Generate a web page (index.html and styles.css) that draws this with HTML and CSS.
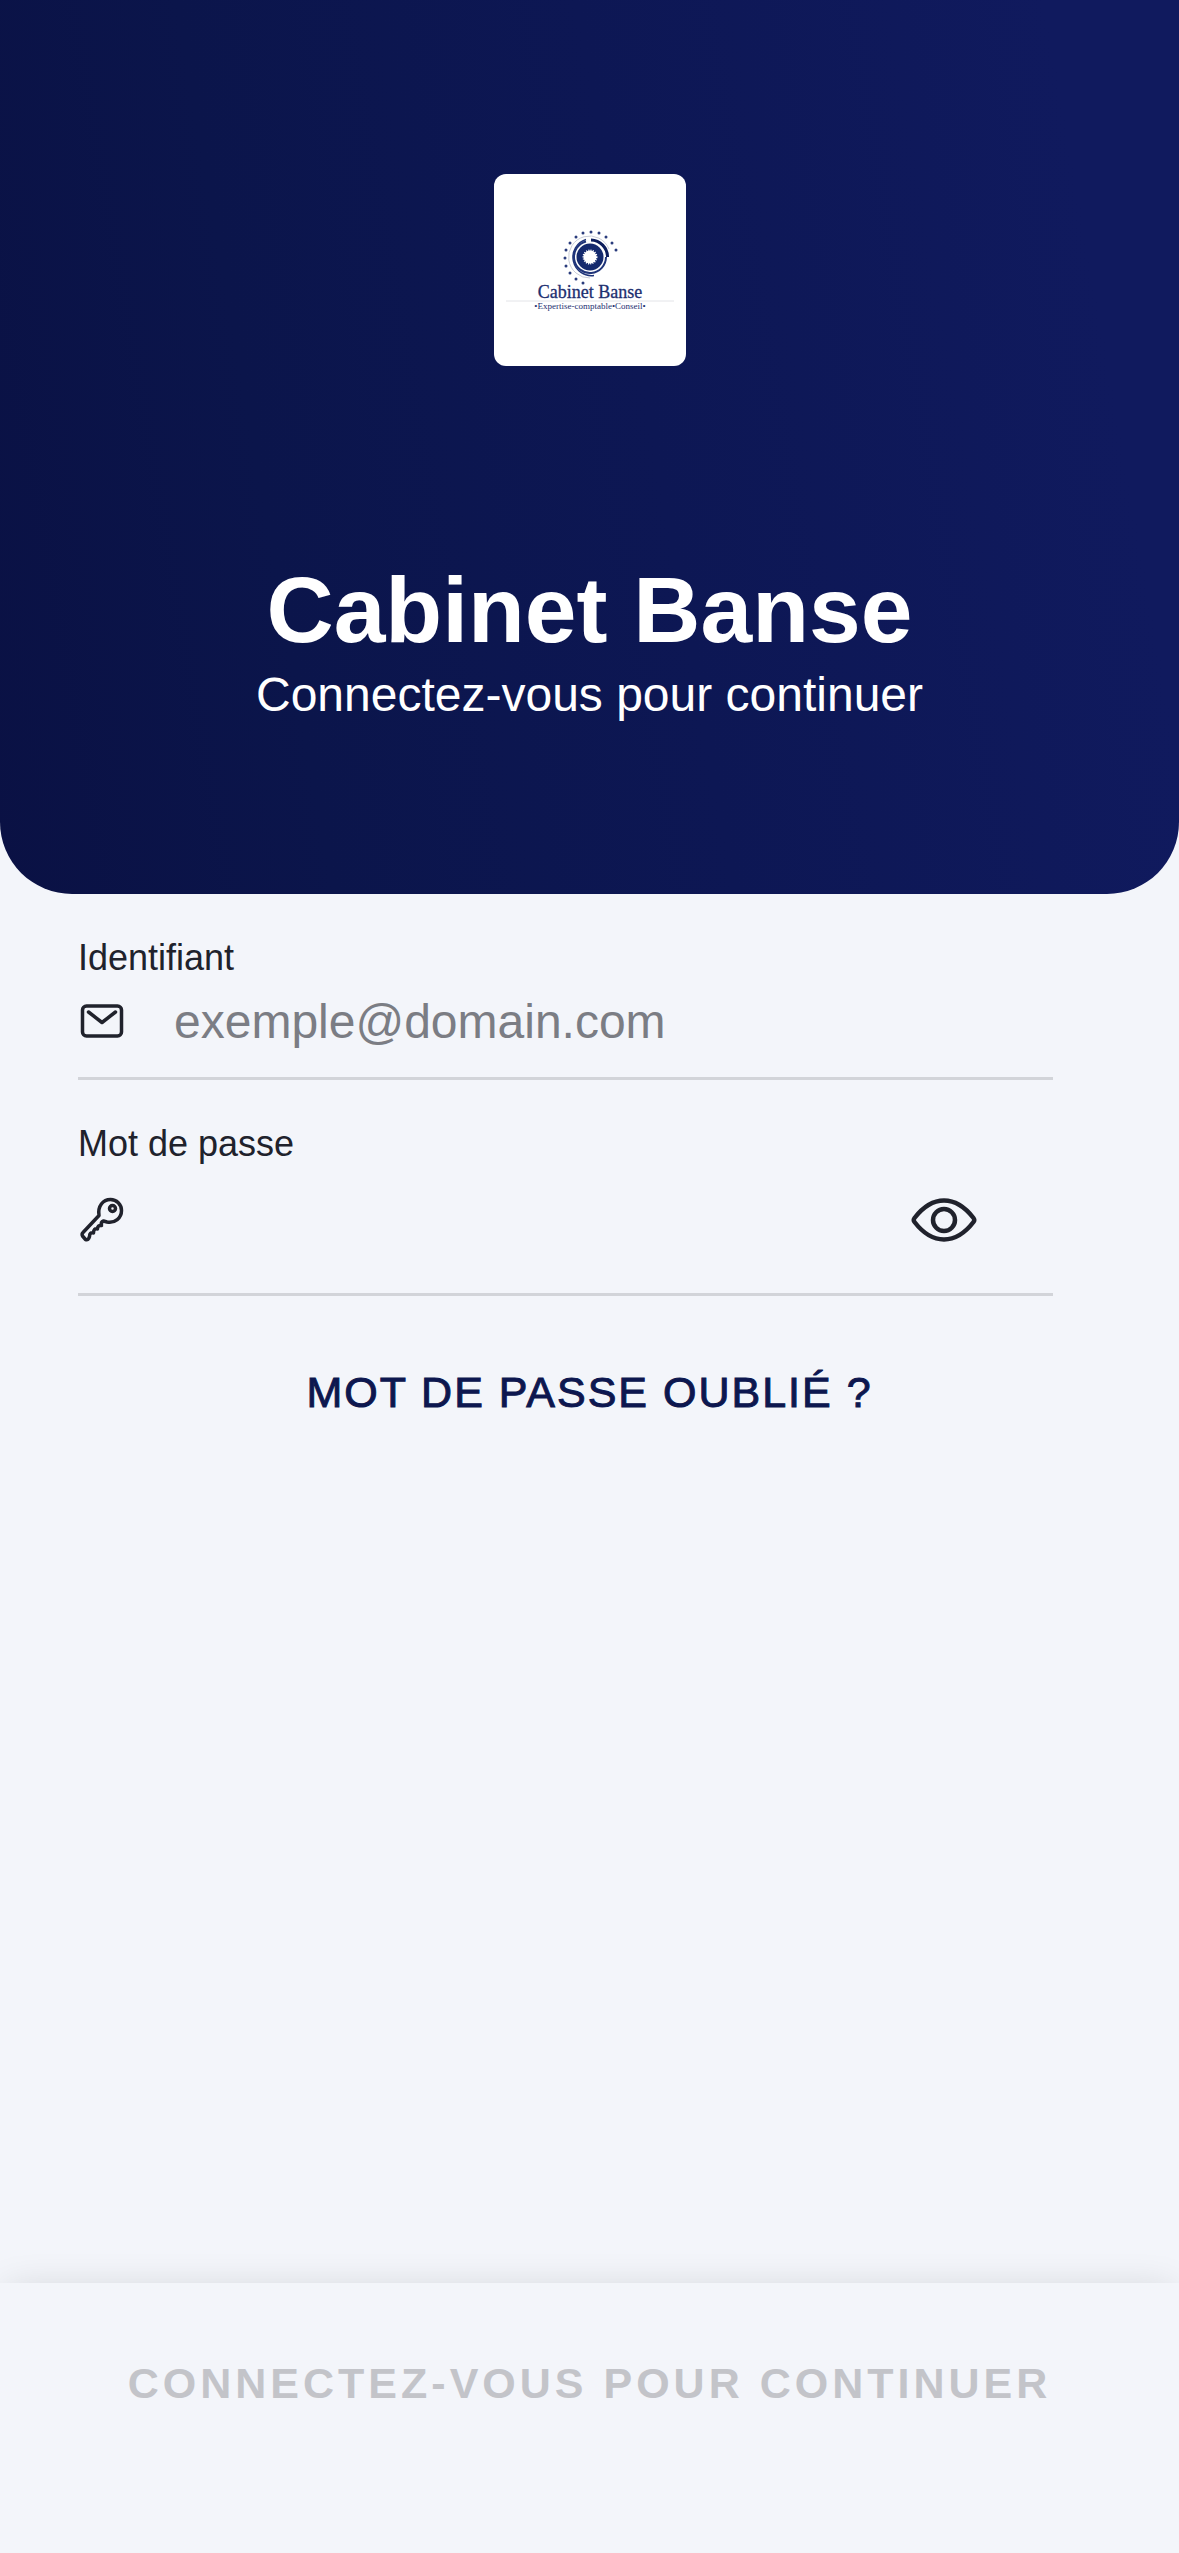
FILE: index.html
```html
<!DOCTYPE html>
<html lang="fr">
<head>
<meta charset="utf-8">
<meta name="viewport" content="width=device-width, initial-scale=1">
<title>Cabinet Banse</title>
<link rel="stylesheet" href="styles.css">
</head>
<body>
<form class="page">
  <header class="hero">
    <svg class="logo" viewBox="0 0 192 192" role="img" aria-label="Cabinet Banse, Expertise-comptable, Conseil">
      <circle cx="96" cy="83" r="10" fill="none" stroke="#152a6e" stroke-width="7"/>
      <circle class="rays" cx="96" cy="83" r="6"/>
      <g fill="none" stroke="#20357a">
        <path d="M92 67.500a16 16 0 1 0 20 15.500" stroke-width="2"/>
        <path d="M97 66a17 17 0 0 1 16.500 17" stroke="#0c1d5c" stroke-width="3"/>
        <path d="M92 65.500a18.500 18.500 0 0 0 8 36" stroke-width="1.500"/>
        <path d="M115 75a21 21 0 1 0-19 29" stroke="#c9cdd8" stroke-width="1"/>
      </g>
      <g fill="#2a3c7c">
        <circle cx="122" cy="76" r="1.500"/><circle cx="118" cy="69" r="1.500"/>
        <circle cx="112" cy="63" r="1.500"/><circle cx="105" cy="59" r="1.500"/>
        <circle cx="97" cy="58" r="1.500"/><circle cx="89" cy="59" r="1.500"/>
        <circle cx="82" cy="63" r="1.500"/><circle cx="76" cy="69" r="1.500"/>
        <circle cx="72" cy="76" r="1.500"/><circle cx="71" cy="84" r="1.500"/>
        <circle cx="72" cy="92" r="1.500"/><circle cx="76" cy="99" r="1.500"/>
        <circle cx="82" cy="105" r="1.500"/><circle cx="89" cy="109" r="1.500"/>
      </g>
      <path d="M12 127H180" stroke="#e3e4e8"/>
      <text class="logo-name" x="96" y="124">Cabinet Banse</text>
      <text class="logo-tag" x="96" y="135">•Expertise-comptable•Conseil•</text>
    </svg>
    <h1 class="title">Cabinet Banse</h1>
    <p class="subtitle">Connectez-vous pour continuer</p>
  </header>

  <main class="fields">
    <div class="field">
      <label class="label" for="login">Identifiant</label>
      <div class="row">
        <svg class="icon" viewBox="0 0 48 48" aria-hidden="true">
          <rect x="4.500" y="8" width="39" height="30" rx="4"/>
          <path d="M10.500 14L24 24.500L37.500 14"/>
        </svg>
        <input class="input" id="login" type="email" placeholder="exemple@domain.com">
      </div>
    </div>
    <div class="field">
      <label class="label" for="password">Mot de passe</label>
      <div class="row row-tall">
        <svg class="icon" viewBox="0 0 48 48" aria-hidden="true">
          <path d="M21 19.500C19.500 10 25 3.500 32.500 3.500A11 11 0 0 1 43.500 14.500C43.500 22 37 27.500 29 26L25.500 25Q22.500 26 23.500 29.500Q19.500 29 19.500 33Q15.500 32 15.500 37Q11.500 36 11.500 40.500Q10.500 44.500 7.500 43.500L4.500 40Q3.500 38 5 36.500Z"/>
          <circle cx="34.500" cy="12.500" r="3"/>
        </svg>
        <input class="input" id="password" type="password">
        <button class="reveal" type="button" aria-label="Afficher le mot de passe">
          <svg class="eye" viewBox="0 0 66 44" aria-hidden="true">
            <path d="M3.500 20Q17 2.500 33 2.500T62.500 20Q64 22 62.500 24Q49 41.500 33 41.500T3.500 24Q2 22 3.500 20Z"/>
            <circle cx="33" cy="22" r="11"/>
          </svg>
        </button>
      </div>
    </div>
    <button class="forgot" type="button">MOT DE PASSE OUBLIÉ ?</button>
  </main>

  <footer class="footer">
    <button class="submit" type="submit" disabled>CONNECTEZ-VOUS POUR CONTINUER</button>
  </footer>
</form>
</body>
</html>
```
FILE: styles.css
```css
* {
  box-sizing: border-box;
}

body {
  margin: 0;
  background: #f3f5fa;
  color: #20222c;
  font-family: "Liberation Sans", Arial, sans-serif;
}

input,
button {
  margin: 0;
  padding: 0;
  border: 0;
  background: none;
  color: inherit;
  font: inherit;
}

.page {
  display: flex;
  flex-direction: column;
  min-height: 100vh;
}

.hero {
  display: flex;
  flex-direction: column;
  align-items: center;
  padding: 174px 48px 166px;
  border-radius: 0 0 72px 72px;
  background: linear-gradient(80deg, #0a1144 0%, #0b154b 25%, #0d1754 55%, #101a5e 90%);
  color: #fff;
  text-align: center;
}

.logo {
  width: 192px;
  height: 192px;
  border-radius: 12px;
  background: #fff;
}

.rays {
  fill: #fff;
  stroke: #fff;
  stroke-width: 3;
  stroke-dasharray: 1 1;
}

.logo-name,
.logo-tag {
  fill: #1d2f70;
  font-family: "Liberation Serif", "Times New Roman", serif;
  text-anchor: middle;
}

.logo-name {
  font-size: 18px;
  stroke: #1d2f70;
  stroke-width: 0.3px;
}

.logo-tag {
  font-size: 9px;
}

.title {
  margin: 192px 0 0;
  font-size: 93px;
  line-height: 104px;
}

.subtitle {
  margin: 0;
  font-size: 48px;
  line-height: 66px;
}

.fields {
  display: flex;
  flex: 1;
  flex-direction: column;
  gap: 42px;
  padding: 42px 126px 42px 78px;
}

.label {
  display: block;
  font-size: 36px;
  line-height: 44px;
}

.row {
  display: flex;
  align-items: center;
  gap: 48px;
  height: 100px;
  padding-bottom: 14px;
  border-bottom: 3px solid #d2d4d9;
}

.row-tall {
  height: 130px;
  padding-bottom: 20px;
}

.icon {
  flex: none;
  width: 48px;
  height: 48px;
}

.icon,
.eye {
  fill: none;
  stroke: #20222c;
  stroke-width: 3.5;
  stroke-linecap: round;
  stroke-linejoin: round;
}

.input {
  flex: 1;
  min-width: 0;
  font-size: 48px;
  line-height: 56px;
  outline: 0;
}

.input::placeholder {
  color: #7b7d84;
  opacity: 1;
}

.reveal {
  display: flex;
  padding: 0 76px 0 0;
}

.eye {
  width: 66px;
  height: 44px;
  stroke-width: 4.5;
}

.forgot,
.submit {
  font-size: 43px;
  line-height: 60px;
}

.forgot {
  align-self: stretch;
  margin: 24px -48px 0 0;
  color: #0d174f;
  letter-spacing: 2px;
  -webkit-text-stroke: 1px currentColor;
}

.footer {
  padding: 70px 48px 140px;
  background: #f3f5fa;
  box-shadow: 0 0 36px -6px rgba(0, 0, 0, 0.14);
  text-align: center;
}

.submit {
  color: #c3c4c9;
  font-weight: 700;
  letter-spacing: 4px;
}
```
